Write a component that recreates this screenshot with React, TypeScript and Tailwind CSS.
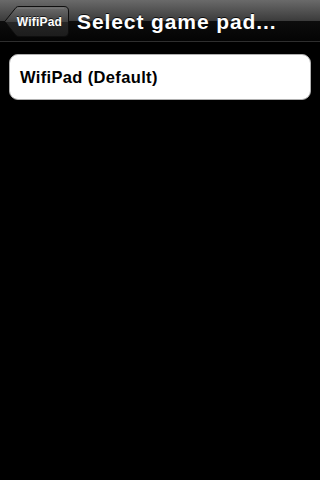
const font = { fontFamily: '"Liberation Sans", Arial, sans-serif' };

function BackButton({ label }: { label: string }) {
  return (
    <button type="button" className="relative flex h-[31px] w-[65px] items-center justify-center pl-[9px] pr-[3px]">
      <svg className="absolute inset-0" width="65" height="31" viewBox="0 0 65 31">
        <defs>
          <linearGradient id="bb" x1="0" y1="0" x2="0" y2="1">
            <stop offset="0" stopColor="#6e6e6e" />
            <stop offset="0.5" stopColor="#424242" />
            <stop offset="0.51" stopColor="#262626" />
            <stop offset="1" stopColor="#1c1c1c" />
          </linearGradient>
        </defs>
        <path
          d="M0.8 15.5 L12 1.5 Q13 0.5 15 0.5 L60 0.5 Q64.5 0.5 64.5 5 L64.5 26 Q64.5 30.5 60 30.5 L15 30.5 Q13 30.5 12 29.5 Z"
          fill="url(#bb)"
          stroke="#0e0e0e"
        />
        <path d="M13 2.2 L60 2.2" stroke="#8a8a8a" strokeWidth="0.8" opacity="0.5" />
      </svg>
      <span className="relative text-[12px] font-bold tracking-[0.2px] text-white [text-shadow:0_-1px_0_rgba(0,0,0,0.7)]">{label}</span>
    </button>
  );
}

export default function App() {
  return (
    <div className="h-[480px] w-[320px] overflow-hidden bg-black" style={font}>
      {/* Nav bar */}
      <div className="relative h-[42px] border-b border-[#2e2e2e] bg-[linear-gradient(to_bottom,#6a6a6a_0%,#3c3c3c_50%,#0d0d0d_51%,#040404_100%)]">
        <div className="flex h-full items-center gap-[8px] pl-[4px] pt-[2px]">
          <BackButton label="WifiPad" />
          <h1 className="text-[21px] font-bold tracking-[0.9px] text-white [text-shadow:0_-1px_0_rgba(0,0,0,0.8)]">Select game pad...</h1>
        </div>
      </div>

      {/* List */}
      <div className="px-[9px] pt-[12px]">
        <div className="flex h-[46px] items-center rounded-[9px] border border-[#b0b0b0] bg-white px-[10px]">
          <span className="text-[16.5px] font-bold tracking-[0.35px] text-black">WifiPad (Default)</span>
        </div>
      </div>
    </div>
  );
}
